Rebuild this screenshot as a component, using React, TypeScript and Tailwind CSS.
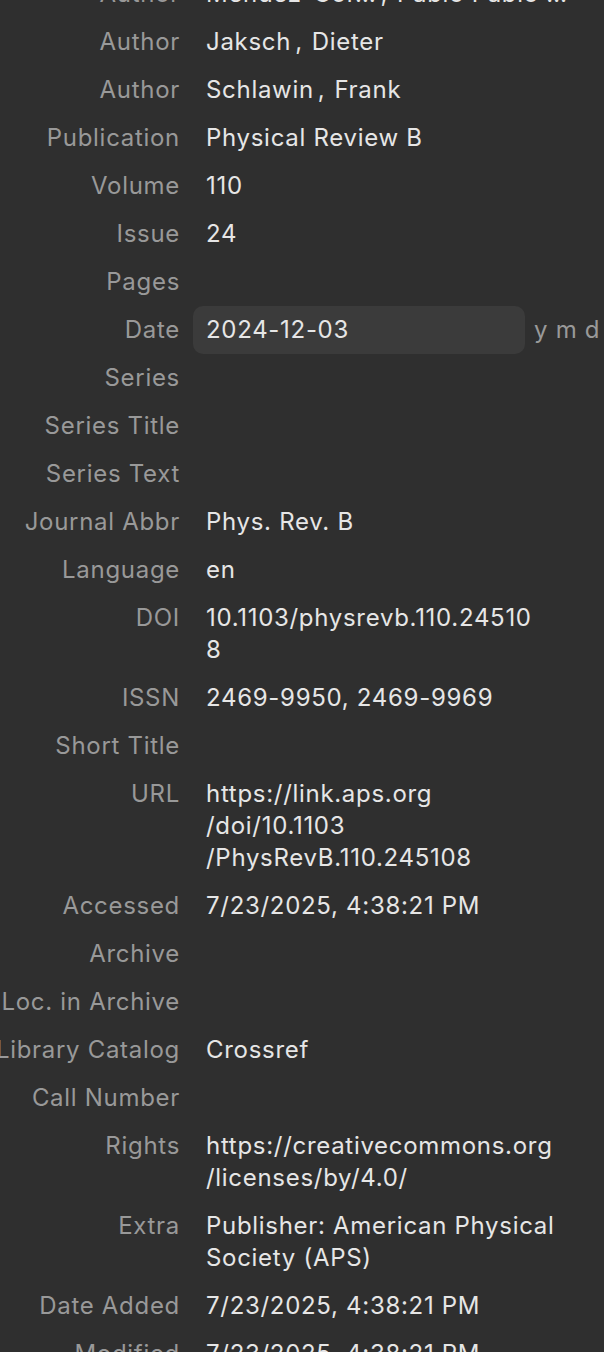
const fields: { label: string; lines: string[] }[] = [
  { label: "Publication", lines: ["Physical Review B"] },
  { label: "Volume", lines: ["110"] },
  { label: "Issue", lines: ["24"] },
  { label: "Pages", lines: [] },
];

const fieldsAfterDate: { label: string; lines: string[] }[] = [
  { label: "Series", lines: [] },
  { label: "Series Title", lines: [] },
  { label: "Series Text", lines: [] },
  { label: "Journal Abbr", lines: ["Phys. Rev. B"] },
  { label: "Language", lines: ["en"] },
  { label: "DOI", lines: ["10.1103/physrevb.110.24510", "8"] },
  { label: "ISSN", lines: ["2469-9950, 2469-9969"] },
  { label: "Short Title", lines: [] },
  { label: "URL", lines: ["https://link.aps.org", "/doi/10.1103", "/PhysRevB.110.245108"] },
  { label: "Accessed", lines: ["7/23/2025, 4:38:21 PM"] },
  { label: "Archive", lines: [] },
  { label: "Loc. in Archive", lines: [] },
  { label: "Library Catalog", lines: ["Crossref"] },
  { label: "Call Number", lines: [] },
  { label: "Rights", lines: ["https://creativecommons.org", "/licenses/by/4.0/"] },
  { label: "Extra", lines: ["Publisher: American Physical", "Society (APS)"] },
  { label: "Date Added", lines: ["7/23/2025, 4:38:21 PM"] },
  { label: "Modified", lines: ["7/23/2025, 4:38:21 PM"] },
];

const Label = ({ text }: { text: string }) => (
  <div className="flex w-[180px] shrink-0 justify-end whitespace-nowrap py-2 text-[#999999]">
    {text}
  </div>
);

const Row = ({ label, lines }: { label: string; lines: string[] }) => (
  <div className="flex min-h-[48px] gap-[26px]">
    <Label text={label} />
    <div className="w-[360px] py-2 text-[#e6e6e6]">
      {lines.map((l, i) => (
        <div key={i} className="whitespace-nowrap">
          {l}
        </div>
      ))}
    </div>
  </div>
);

const CreatorRow = ({ last, first }: { last: string; first: string }) => (
  <div className="flex h-[48px] gap-[26px]">
    <Label text="Author" />
    <div className="flex whitespace-nowrap py-2 text-[#e6e6e6]">
      <span>{last}</span>
      <span className="ml-[4px]">,</span>
      <span className="ml-[9px]">{first}</span>
    </div>
  </div>
);

export default function App() {
  return (
    <div
      className="h-[1352px] w-[604px] overflow-hidden bg-[#2f2f2f] text-[24px] leading-[32px] tracking-[0.7px] antialiased"
      style={{ fontFamily: "Inter, 'Noto Sans', sans-serif" }}
    >
      <div className="mt-[-30px] flex flex-col">
        <CreatorRow last="Mendez-Cor…" first="Pablo Pablo …" />
        <CreatorRow last="Jaksch" first="Dieter" />
        <CreatorRow last="Schlawin" first="Frank" />
        {fields.map((f) => (
          <Row key={f.label} {...f} />
        ))}
        <div className="flex h-[48px] items-center">
          <div className="w-[180px] shrink-0">
            <Label text="Date" />
          </div>
          <div className="ml-[13px] flex h-[48px] w-[332px] items-center rounded-[10px] bg-[#3b3b3b] pl-[13px] text-[#e6e6e6]">
            2024-12-03
          </div>
          <span className="ml-[9px] whitespace-nowrap text-[#999999]">y m d</span>
        </div>
        {fieldsAfterDate.map((f) => (
          <Row key={f.label} {...f} />
        ))}
      </div>
    </div>
  );
}
